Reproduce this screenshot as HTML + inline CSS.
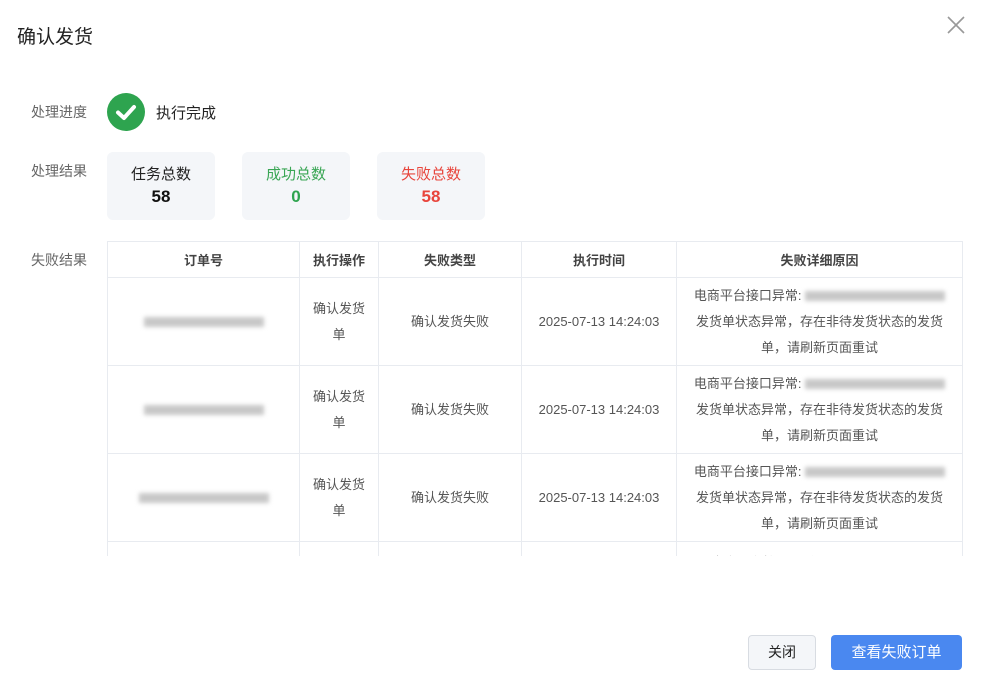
<!DOCTYPE html>
<html><head><meta charset="utf-8"><style>
*{margin:0;padding:0;box-sizing:border-box}
body{width:981px;height:690px;background:#fff;font-family:"Liberation Sans","Noto Sans CJK SC",sans-serif;position:relative;overflow:hidden;color:#333}
.a{position:absolute}
.lbl{position:absolute;left:31px;font-size:14px;color:#666}
.card{position:absolute;top:152px;width:108px;height:68px;background:#f4f6f9;border-radius:6px;text-align:center}
.card .t{font-size:15px;margin-top:11px}
.card .n{font-size:17px;font-weight:bold;margin-top:3px}
table{position:absolute;left:107px;top:241px;width:855px;border-collapse:collapse;font-size:13px;color:#555;table-layout:fixed}
td,th{border:1px solid #e8ebf0;text-align:center;vertical-align:middle}
th{height:36px;font-weight:bold;color:#444}
td{height:88px;line-height:26px}
.blur{display:inline-block;height:10px;background:#c8c8c8;filter:blur(2px);vertical-align:middle}
.wrap{position:absolute;left:107px;top:241px;width:856px;height:315px;overflow:hidden}
.wrap table{left:0;top:0}
.last td{vertical-align:top;padding-top:8px}
</style></head><body>
<div class="a" style="left:17px;top:22px;font-size:19px;color:#222">确认发货</div>
<svg class="a" style="left:947px;top:16px" width="18" height="18"><path d="M1 1L17 17M17 1L1 17" stroke="#999" stroke-width="1.6"/></svg>
<div class="lbl" style="top:102px">处理进度</div>
<svg class="a" style="left:107px;top:93px" width="38" height="38"><circle cx="19" cy="19" r="19" fill="#2ea44f"/><path d="M11 19.5L17 25L27 14" stroke="#fff" stroke-width="4" fill="none" stroke-linecap="round" stroke-linejoin="round"/></svg>
<div class="a" style="left:156px;top:102px;font-size:15px;color:#222">执行完成</div>
<div class="lbl" style="top:161px">处理结果</div>
<div class="card" style="left:107px"><div class="t" style="color:#222">任务总数</div><div class="n" style="color:#111">58</div></div>
<div class="card" style="left:242px"><div class="t" style="color:#3aa655">成功总数</div><div class="n" style="color:#2ea44f">0</div></div>
<div class="card" style="left:377px"><div class="t" style="color:#e8453c">失败总数</div><div class="n" style="color:#e8453c">58</div></div>
<div class="lbl" style="top:250px">失败结果</div>
<div class="wrap"><table>
<colgroup><col style="width:192px"><col style="width:79px"><col style="width:143px"><col style="width:155px"><col style="width:286px"></colgroup>
<tr><th>订单号</th><th>执行操作</th><th>失败类型</th><th>执行时间</th><th>失败详细原因</th></tr>
<tr><td><span class="blur" style="width:120px"></span></td><td>确认发货<br>单</td><td>确认发货失败</td><td>2025-07-13 14:24:03</td><td>电商平台接口异常: <span class="blur" style="width:140px"></span><br>发货单状态异常，存在非待发货状态的发货<br>单，请刷新页面重试</td></tr>
<tr><td><span class="blur" style="width:120px"></span></td><td>确认发货<br>单</td><td>确认发货失败</td><td>2025-07-13 14:24:03</td><td>电商平台接口异常: <span class="blur" style="width:140px"></span><br>发货单状态异常，存在非待发货状态的发货<br>单，请刷新页面重试</td></tr>
<tr><td><span class="blur" style="width:130px"></span></td><td>确认发货<br>单</td><td>确认发货失败</td><td>2025-07-13 14:24:03</td><td>电商平台接口异常: <span class="blur" style="width:140px"></span><br>发货单状态异常，存在非待发货状态的发货<br>单，请刷新页面重试</td></tr>
<tr class="last"><td></td><td></td><td></td><td></td><td>电商平台接口异常: TI1234412345678</td></tr>
</table></div>
<div class="a" style="left:748px;top:635px;width:68px;height:35px;border:1px solid #d8dce2;border-radius:4px;background:#f4f6f9;font-size:14px;line-height:33px;text-align:center;color:#222">关闭</div>
<div class="a" style="left:831px;top:635px;width:131px;height:35px;border-radius:4px;background:#4a88f0;font-size:15px;line-height:35px;text-align:center;color:#fff">查看失败订单</div>
</body></html>
